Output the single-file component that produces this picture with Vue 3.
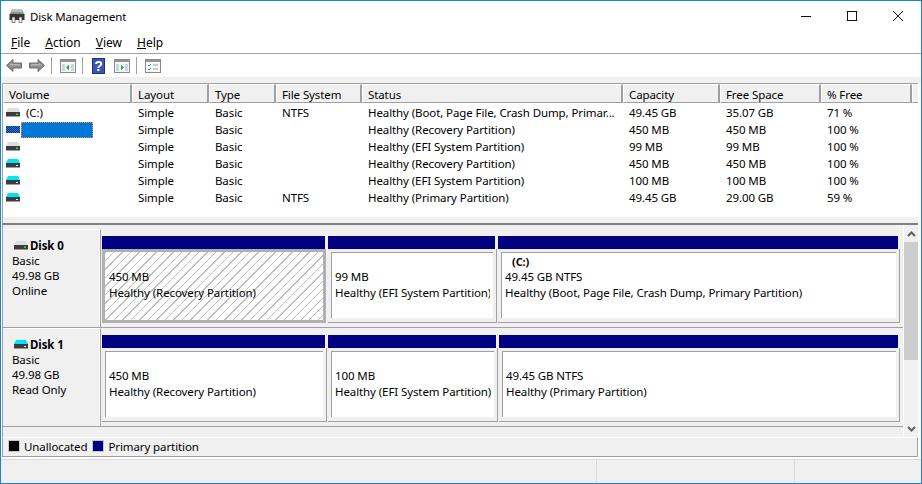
<script setup>
const columns = [
  { label: 'Volume', width: 129 },
  { label: 'Layout', width: 77 },
  { label: 'Type', width: 67 },
  { label: 'File System', width: 86 },
  { label: 'Status', width: 261 },
  { label: 'Capacity', width: 97 },
  { label: 'Free Space', width: 101 },
  { label: '% Free', width: 91 }
]

const volumes = [
  { icon: 'drive-grey', name: '(C:)', fs: 'NTFS', status: 'Healthy (Boot, Page File, Crash Dump, Primar...', cap: '49.45 GB', free: '35.07 GB', pct: '71 %' },
  { icon: 'drive-hatch', selected: true, fs: '', status: 'Healthy (Recovery Partition)', cap: '450 MB', free: '450 MB', pct: '100 %' },
  { icon: 'drive-grey', fs: '', status: 'Healthy (EFI System Partition)', cap: '99 MB', free: '99 MB', pct: '100 %' },
  { icon: 'drive-cyan', fs: '', status: 'Healthy (Recovery Partition)', cap: '450 MB', free: '450 MB', pct: '100 %' },
  { icon: 'drive-cyan', fs: '', status: 'Healthy (EFI System Partition)', cap: '100 MB', free: '100 MB', pct: '100 %' },
  { icon: 'drive-cyan', fs: 'NTFS', status: 'Healthy (Primary Partition)', cap: '49.45 GB', free: '29.00 GB', pct: '59 %' }
]

const disks = [
  {
    name: 'Disk 0',
    icon: 'drive-grey',
    lines: ['Basic', '49.98 GB', 'Online'],
    parts: [
      { width: 226, size: '450 MB', status: 'Healthy (Recovery Partition)', selected: true },
      { width: 170, size: '99 MB', status: 'Healthy (EFI System Partition)' },
      { width: 403, label: '(C:)', size: '49.45 GB NTFS', status: 'Healthy (Boot, Page File, Crash Dump, Primary Partition)' }
    ]
  },
  {
    name: 'Disk 1',
    icon: 'drive-cyan',
    lines: ['Basic', '49.98 GB', 'Read Only'],
    parts: [
      { width: 226, size: '450 MB', status: 'Healthy (Recovery Partition)' },
      { width: 171, size: '100 MB', status: 'Healthy (EFI System Partition)' },
      { width: 402, size: '49.45 GB NTFS', status: 'Healthy (Primary Partition)' }
    ]
  }
]
</script>

<template>
  <div class="window">
    <svg class="defs" width="0" height="0">
      <defs>
        <pattern id="checker" width="2" height="2" patternUnits="userSpaceOnUse">
          <rect width="2" height="2" fill="#1c7fd0" />
          <rect width="1" height="1" fill="#0a2a80" />
          <rect x="1" y="1" width="1" height="1" fill="#0a2a80" />
        </pattern>
        <symbol id="drive-grey" viewBox="0 0 14 9">
          <path d="M2 0h10l2 4H0z" fill="#dedede" />
          <rect y="4" width="14" height="4.5" fill="#3c3c3c" />
          <rect x="10" y="5.5" width="2" height="1.5" fill="#35d05a" />
        </symbol>
        <symbol id="drive-cyan" viewBox="0 0 14 9">
          <path d="M2 0h10l2 4H0z" fill="#00e4f4" />
          <rect y="4" width="14" height="4.5" fill="#3c3c3c" />
          <rect x="10" y="6" width="2" height="1" fill="#e8e8e8" />
        </symbol>
        <symbol id="drive-hatch" viewBox="0 0 14 9">
          <rect y="1" width="14" height="7" fill="url(#checker)" />
        </symbol>
        <symbol id="win-frame" viewBox="0 0 16 14">
          <rect x="0.5" y="0.5" width="15" height="13" fill="#f4f6f8" stroke="#8a8a8a" />
          <rect x="1" y="1" width="14" height="2" fill="#8f959b" />
          <rect x="2" y="5" width="3" height="7" fill="#c9d6e2" />
          <rect x="11" y="5" width="3" height="7" fill="#c9d6e2" />
        </symbol>
      </defs>
    </svg>

    <header class="titlebar">
      <svg class="app-icon" width="16" height="14" viewBox="0 0 16 14">
        <path d="M3 0.5h10l2.5 5h-15z" fill="#8e8e8e" />
        <path d="M3.5 1h9l1 2h-11z" fill="#bdbdbd" />
        <rect x="0.5" y="5" width="15" height="6" fill="#333" />
        <rect x="11" y="3" width="3" height="1.5" fill="#39d05c" />
        <rect x="3" y="8" width="3" height="5.5" fill="#f2f2f2" stroke="#333" stroke-width="0.6" />
        <rect x="10" y="8" width="3" height="5.5" fill="#f2f2f2" stroke="#333" stroke-width="0.6" />
      </svg>
      <span class="title">Disk Management</span>
      <div class="caption">
        <div class="cap-btn">
          <svg width="10" height="10" viewBox="0 0 10 10"><path d="M0 5.5h10" stroke="#111" /></svg>
        </div>
        <div class="cap-btn">
          <svg width="10" height="10" viewBox="0 0 10 10"><rect x="0.5" y="0.5" width="9" height="9" fill="none" stroke="#111" /></svg>
        </div>
        <div class="cap-btn">
          <svg width="10" height="10" viewBox="0 0 10 10"><path d="M0 0l10 10M10 0L0 10" stroke="#111" stroke-width="1" /></svg>
        </div>
      </div>
    </header>

    <nav class="menubar">
      <span><u>F</u>ile</span>
      <span><u>A</u>ction</span>
      <span><u>V</u>iew</span>
      <span><u>H</u>elp</span>
    </nav>

    <div class="toolbar">
      <svg class="tool arrow" width="16" height="13" viewBox="0 0 16 13">
        <path d="M7 0.5L0.5 6.5 7 12.5V9h8.5V4H7z" fill="#8c8c8c" stroke="#6e6e6e" />
        <path d="M6 4l-3 2.5h11V5H6z" fill="#b5b5b5" />
      </svg>
      <svg class="tool arrow-next" width="16" height="13" viewBox="0 0 16 13">
        <path d="M9 0.5l6.5 6L9 12.5V9H0.5V4H9z" fill="#8c8c8c" stroke="#6e6e6e" />
        <path d="M10 4l3 2.5H2V5h8z" fill="#b5b5b5" />
      </svg>
      <i class="sep"></i>
      <svg class="tool" width="16" height="14" viewBox="0 0 16 14">
        <use href="#win-frame" />
        <path d="M6 8.5l3-3v6z" fill="#2fa84a" />
      </svg>
      <i class="sep"></i>
      <svg class="tool help" width="13" height="16" viewBox="0 0 13 16">
        <rect width="13" height="16" fill="#3a55b4" />
        <rect x="0.5" y="0.5" width="12" height="15" fill="none" stroke="#1f2f86" />
        <text x="6.5" y="13" text-anchor="middle" class="help-mark">?</text>
      </svg>
      <svg class="tool after-help" width="16" height="14" viewBox="0 0 16 14">
        <use href="#win-frame" />
        <path d="M7 5.5l3 3-3 3z" fill="#2fa84a" />
      </svg>
      <i class="sep"></i>
      <svg class="tool" width="16" height="14" viewBox="0 0 16 14">
        <rect x="0.5" y="0.5" width="15" height="13" fill="#f6f8fa" stroke="#8a8a8a" />
        <rect x="1" y="1" width="14" height="2" fill="#8f959b" />
        <path d="M3 6l1 1 2-2M3 10l1 1 2-2" fill="none" stroke="#2e7fd0" />
        <path d="M8 6h5M8 10h5" stroke="#9a9a9a" />
      </svg>
    </div>

    <div class="strip"></div>

    <section class="list">
      <div class="thead">
        <div v-for="c in columns" :key="c.label" class="th" :style="{ width: c.width + 'px' }">{{ c.label }}</div>
        <div class="th rest"></div>
      </div>
      <div class="tbody">
        <div v-for="(v, i) in volumes" :key="i" class="tr">
          <div class="td vol" :style="{ width: columns[0].width + 'px' }">
            <svg class="row-icon" width="14" height="9"><use :href="'#' + v.icon" /></svg>
            <span v-if="v.selected" class="selection"></span>
            <span v-else class="vol-name">{{ v.name }}</span>
          </div>
          <div class="td" :style="{ width: columns[1].width + 'px' }">Simple</div>
          <div class="td" :style="{ width: columns[2].width + 'px' }">Basic</div>
          <div class="td" :style="{ width: columns[3].width + 'px' }">{{ v.fs }}</div>
          <div class="td" :style="{ width: columns[4].width + 'px' }">{{ v.status }}</div>
          <div class="td" :style="{ width: columns[5].width + 'px' }">{{ v.cap }}</div>
          <div class="td" :style="{ width: columns[6].width + 'px' }">{{ v.free }}</div>
          <div class="td" :style="{ width: columns[7].width + 'px' }">{{ v.pct }}</div>
        </div>
      </div>
      <div class="list-foot"></div>
    </section>

    <section class="graph">
      <div class="disks">
        <div v-for="d in disks" :key="d.name" class="disk">
          <div class="disk-label">
            <div class="disk-name">
              <svg width="14" height="9"><use :href="'#' + d.icon" /></svg>
              <b>{{ d.name }}</b>
            </div>
            <div v-for="l in d.lines" :key="l" class="disk-line">{{ l }}</div>
          </div>
          <div class="parts">
            <div v-for="p in d.parts" :key="p.status + p.size" class="part" :style="{ width: p.width + 'px' }">
              <div class="part-bar"></div>
              <div class="part-box" :class="{ selected: p.selected }">
                <div class="part-inner">
                  <div class="part-name">{{ p.label }}</div>
                  <div class="part-text">{{ p.size }}</div>
                  <div class="part-text">{{ p.status }}</div>
                </div>
              </div>
            </div>
          </div>
        </div>
      </div>
      <div class="scrollbar">
        <div class="sb-btn">
          <svg width="9" height="6" viewBox="0 0 9 6"><path d="M1 5l3.5-3.5L8 5" fill="none" stroke="#606060" stroke-width="2" /></svg>
        </div>
        <div class="sb-thumb"></div>
        <div class="sb-space"></div>
        <div class="sb-btn">
          <svg width="9" height="6" viewBox="0 0 9 6"><path d="M1 1l3.5 3.5L8 1" fill="none" stroke="#606060" stroke-width="2" /></svg>
        </div>
      </div>
    </section>

    <div class="legend">
      <i class="swatch black"></i><span>Unallocated</span>
      <i class="swatch navy"></i><span>Primary partition</span>
    </div>

    <footer class="statusbar">
      <div class="st st-a"></div>
      <div class="st st-b"></div>
      <div class="st st-c"></div>
    </footer>
  </div>
</template>

<style scoped>
.window {
  width: 922px;
  height: 484px;
  box-sizing: border-box;
  border: 1px solid #1883d7;
  background: #fff;
  display: flex;
  flex-direction: column;
  font-family: "Noto Sans", "Liberation Sans", sans-serif;
  font-size: 11.5px;
  letter-spacing: -0.1px;
  color: #000;
  overflow: hidden;
}
.defs {
  position: absolute;
}
.titlebar {
  height: 30px;
  display: flex;
  align-items: center;
  padding-left: 8px;
  flex: none;
}
.app-icon {
  margin-right: 5px;
}
.title {
  font-size: 11.5px;
  letter-spacing: -0.15px;
}
.caption {
  margin-left: auto;
  display: flex;
}
.cap-btn {
  width: 46px;
  height: 30px;
  display: flex;
  align-items: center;
  justify-content: center;
}
.menubar {
  height: 22px;
  flex: none;
  display: flex;
  align-items: center;
  padding-left: 10px;
  font-size: 12px;
  letter-spacing: 0;
}
.menubar span {
  margin-right: 15px;
}
.toolbar {
  height: 23px;
  flex: none;
  border-top: 1px solid #a0a0a8;
  display: flex;
  align-items: center;
  padding-left: 5px;
}
.arrow-next {
  margin-left: 7px;
}
.sep {
  width: 1px;
  height: 17px;
  background: #a0a0a0;
  margin: 0 8px 0 6px;
}
.help {
  margin-left: 1px;
}
.after-help {
  margin-left: 9px;
}
.help-mark {
  fill: #fff;
  font: bold 14px "Liberation Sans", sans-serif;
}
.strip {
  height: 6px;
  flex: none;
  background: #f0f0f0;
}
.list {
  height: 139px;
  flex: none;
  margin-right: 3px;
  margin-left: 1px;
  border-top: 1px solid #a0a0a0;
  border-left: 1px solid #a0a0a0;
  border-bottom: 2px solid #808080;
  display: flex;
  flex-direction: column;
  background: #fff;
}
.thead {
  display: flex;
  height: 20px;
  flex: none;
}
.th {
  flex: none;
  box-sizing: border-box;
  height: 19px;
  line-height: 19px;
  padding-left: 5px;
  background: #f0f0f0;
  border-top: 1px solid #fff;
  border-left: 1px solid #fff;
  border-right: 2px solid #a0a0a0;
  border-bottom: 1px solid #a0a0a0;
}
.th.rest {
  flex: 1;
  min-width: 0;
  padding-left: 0;
  border-right: 0;
}
.tbody {
  flex: none;
}
.tr {
  display: flex;
  height: 17px;
  line-height: 17px;
}
.td {
  flex: none;
  padding-left: 6px;
  box-sizing: border-box;
  white-space: nowrap;
  overflow: hidden;
}
.vol {
  display: flex;
  align-items: center;
  padding-left: 3px;
  overflow: visible;
}
.row-icon {
  flex: none;
}
.vol-name {
  margin-left: 6px;
}
.selection {
  width: 72px;
  height: 16px;
  box-sizing: border-box;
  margin-left: 1px;
  background: #0078d7;
  border: 1px dotted #ff8a28;
}
.list-foot {
  margin-top: auto;
  height: 6px;
  background: #f0f0f0;
}
.graph {
  height: 212px;
  flex: none;
  margin-left: 1px;
  margin-right: 3px;
  border-left: 1px solid #a0a0a0;
  background: #f0f0f0;
  display: flex;
}
.disks {
  flex: 1;
  padding-top: 4px;
}
.disk {
  height: 99px;
  box-sizing: border-box;
  display: flex;
  border-bottom: 1px solid #a0a0a0;
}
.disk-label {
  width: 98px;
  box-sizing: border-box;
  flex: none;
  padding: 8px 0 0 9px;
  border-top: 1px solid #fff;
  border-right: 1px solid #a0a0a0;
  box-shadow: inset -1px 0 0 #fff;
  line-height: 15px;
}
.disk-name {
  display: flex;
  align-items: center;
  gap: 2px;
  margin-left: 2px;
  height: 15px;
  font-size: 11.5px;
}
.parts {
  display: flex;
  padding: 6px 0 0 1px;
  border-top: 1px solid #f0f0f0;
}
.part {
  flex: none;
}
.part-bar {
  height: 13px;
  margin-right: 3px;
  background: #000080;
}
.part-box {
  height: 74px;
  box-sizing: border-box;
  margin-top: 0;
  margin-right: 1px;
  padding: 3px 3px 4px;
  border-right: 1px solid #a0a0a0;
  border-bottom: 1px solid #a0a0a0;
  background: #f0f0f0;
}
.part-inner {
  height: 100%;
  box-sizing: border-box;
  background: #fff;
  border-top: 1px solid #a0a0a0;
  border-left: 1px solid #a0a0a0;
  padding-left: 3px;
  line-height: 15.5px;
  white-space: nowrap;
  overflow: hidden;
}
.part-name {
  height: 16px;
  box-sizing: border-box;
  padding: 1px 0 0 7px;
  font-weight: 700;
  font-size: 11px;
}
.part-text {
  overflow: hidden;
  margin-right: 3px;
}
.part-box.selected {
  border: 3px solid #b0b0b0;
  padding: 0;
  margin-right: 2px;
}
.part-box.selected .part-inner {
  border: 0;
  padding-left: 4px;
  padding-top: 1px;
  background: repeating-linear-gradient(135deg, #bdbdbd 0 1px, #fff 1px 6px);
}
.scrollbar {
  width: 15px;
  flex: none;
  box-sizing: border-box;
  padding-top: 1px;
  border-left: 1px solid #fff;
  display: flex;
  flex-direction: column;
}
.sb-btn {
  height: 16px;
  flex: none;
  display: flex;
  align-items: center;
  justify-content: center;
}
.sb-thumb {
  height: 118px;
  background: #cdcdcd;
}
.sb-space {
  flex: 1;
}
.legend {
  height: 20px;
  flex: none;
  margin-left: 1px;
  margin-right: 3px;
  box-sizing: border-box;
  border-top: 1px solid #fff;
  border-left: 1px solid #a0a0a0;
  border-right: 1px solid #a0a0a0;
  border-bottom: 1px solid #a0a0a0;
  background: #f0f0f0;
  display: flex;
  align-items: center;
  padding: 0 0 2px 5px;
}
.swatch {
  width: 10px;
  height: 10px;
  border: 1px solid #c8c8c8;
  margin-right: 4px;
}
.swatch.black {
  background: #000;
}
.swatch.navy {
  background: #000080;
}
.legend span {
  margin-right: 5px;
}
.statusbar {
  margin-top: 2px;
  flex: 1;
  display: flex;
  background: #f0f0f0;
  border-top: 1px solid #d9d9d9;
}
.st {
  border-right: 1px solid #d9d9d9;
}
.st-a {
  width: 595px;
}
.st-b {
  width: 197px;
}
.st-c {
  flex: 1;
  border-right: 0;
}
</style>

<style>
html,
body {
  margin: 0;
  background: #fff;
}
</style>
